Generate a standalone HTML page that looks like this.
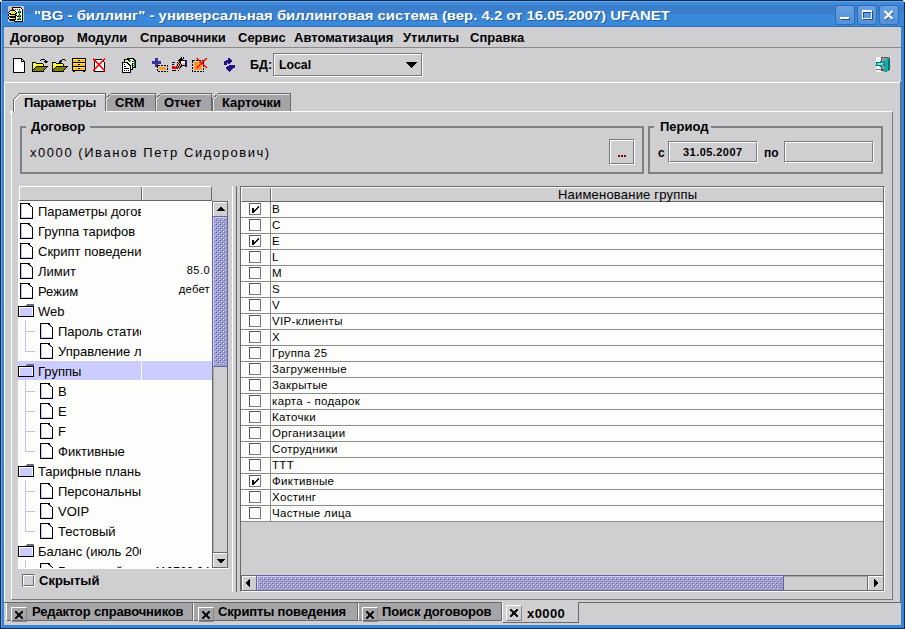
<!DOCTYPE html>
<html><head><meta charset="utf-8">
<style>
html,body{margin:0;padding:0;}
body{width:905px;height:629px;position:relative;overflow:hidden;background:#3a84d4;font-family:"Liberation Sans",sans-serif;}
div,span,svg{position:absolute;box-sizing:border-box;}
.t{white-space:pre;line-height:1;color:#000;}
.b13{font-size:13px;font-weight:bold;}
.n13{font-size:13px;}
.n12{font-size:12px;}
.n11{font-size:11.5px;letter-spacing:0.35px;}
.g{background:#cfcfd1;}
</style></head><body>
<svg style="left:0;top:0;" width="0" height="0"><defs><pattern id="bumps" x="0" y="0" width="4" height="4" patternUnits="userSpaceOnUse"><rect x="0" y="0" width="1" height="1" fill="#d8d8ff"/><rect x="2" y="2" width="1" height="1" fill="#d8d8ff"/><rect x="1" y="1" width="1" height="1" fill="#666699"/><rect x="3" y="3" width="1" height="1" fill="#666699"/></pattern></defs></svg>
<!-- window frame -->
<div style="left:0;top:0;width:905px;height:629px;border:1px solid #0e2c52;background:#3a84d4;"></div>
<div style="left:1px;top:1px;width:903px;height:1px;background:#6aa4ea;"></div>
<div style="left:1px;top:2px;width:903px;height:3px;background:#3e8ada;"></div>
<div style="left:1px;top:5px;width:903px;height:9px;background:#3a7ecc;"></div>
<div style="left:1px;top:14px;width:903px;height:12px;background:#3a88d8;"></div>
<div style="left:1px;top:26px;width:903px;height:1px;background:#2e6cc0;"></div>
<div style="left:1px;top:2px;width:1px;height:625px;background:#6aa4ea;"></div>
<div style="left:0;top:0;width:2px;height:1px;background:#fff;"></div><div style="left:0;top:1px;width:1px;height:1px;background:#fff;"></div>
<div style="left:903px;top:0;width:2px;height:1px;background:#fff;"></div><div style="left:904px;top:1px;width:1px;height:1px;background:#fff;"></div>
<!-- client -->
<div class="g" style="left:4px;top:27px;width:897px;height:598px;"></div>

<!-- title text -->
<span class="t" style="left:34px;top:9px;font-size:13px;font-weight:bold;color:#fff;transform:scaleX(1.146);transform-origin:0 0;text-shadow:1px 1px 0 rgba(10,40,90,0.45);">"BG - биллинг" - универсальная биллинговая система (вер. 4.2 от 16.05.2007) UFANET</span>

<!-- menu -->
<span class="t b13" style="left:10px;top:31px;">Договор</span>
<span class="t b13" style="left:77px;top:31px;">Модули</span>
<span class="t b13" style="left:140px;top:31px;">Справочники</span>
<span class="t b13" style="left:238px;top:31px;">Сервис</span>
<span class="t b13" style="left:294px;top:31px;">Автоматизация</span>
<span class="t b13" style="left:403px;top:31px;">Утилиты</span>
<span class="t b13" style="left:470px;top:31px;">Справка</span>
<div style="left:4px;top:47px;width:897px;height:1px;background:#8a8a8a;"></div>


<!-- title buttons -->
<div style="left:835px;top:5px;width:20px;height:20px;border:1px solid #2f6bb8;border-radius:3px;background:linear-gradient(#6aa2e2,#5290d8);"></div>
<div style="left:857px;top:5px;width:20px;height:20px;border:1px solid #2f6bb8;border-radius:3px;background:linear-gradient(#6aa2e2,#5290d8);"></div>
<div style="left:879px;top:5px;width:20px;height:20px;border:1px solid #2f6bb8;border-radius:3px;background:linear-gradient(#6aa2e2,#5290d8);"></div>
<div style="left:841px;top:18px;width:9px;height:2px;background:#234c86;"></div>
<div style="left:840px;top:17px;width:9px;height:2px;background:#fff;"></div>
<div style="left:863px;top:11px;width:10px;height:9px;border:1px solid #234c86;border-top-width:2px;"></div>
<div style="left:862px;top:10px;width:10px;height:9px;border:1px solid #fff;border-top-width:2px;"></div>
<svg style="left:879px;top:5px;" width="20" height="20" viewBox="0 0 20 20"><path d="M6 7 L14 15 M14 7 L6 15" stroke="#234c86" stroke-width="2.2"/><path d="M5.5 6 L13.5 14 M13.5 6 L5.5 14" stroke="#fff" stroke-width="2.2"/></svg>

<!-- title icon -->
<svg style="left:8px;top:6px;" width="16" height="16" viewBox="0 0 16 16" shape-rendering="crispEdges"><rect x="0" y="0" width="16" height="1" fill="#c4c4c4"/><rect x="0" y="1" width="4" height="1" fill="#c4c4c4"/><rect x="4" y="1" width="9" height="1" fill="#000"/><rect x="13" y="1" width="3" height="1" fill="#c4c4c4"/><rect x="0" y="2" width="4" height="1" fill="#c4c4c4"/><rect x="4" y="2" width="1" height="1" fill="#000"/><rect x="5" y="2" width="8" height="1" fill="#fff"/><rect x="13" y="2" width="1" height="1" fill="#000"/><rect x="14" y="2" width="1" height="1" fill="#fff"/><rect x="15" y="2" width="1" height="1" fill="#c4c4c4"/><rect x="0" y="3" width="4" height="1" fill="#c4c4c4"/><rect x="4" y="3" width="1" height="1" fill="#000"/><rect x="5" y="3" width="1" height="1" fill="#f00"/><rect x="6" y="3" width="1" height="1" fill="#fff"/><rect x="7" y="3" width="1" height="1" fill="#f00"/><rect x="8" y="3" width="1" height="1" fill="#fff"/><rect x="9" y="3" width="1" height="1" fill="#f00"/><rect x="10" y="3" width="1" height="1" fill="#fff"/><rect x="11" y="3" width="1" height="1" fill="#f00"/><rect x="12" y="3" width="2" height="1" fill="#fff"/><rect x="14" y="3" width="1" height="1" fill="#000"/><rect x="15" y="3" width="1" height="1" fill="#c4c4c4"/><rect x="0" y="4" width="2" height="1" fill="#c4c4c4"/><rect x="2" y="4" width="5" height="1" fill="#000"/><rect x="7" y="4" width="4" height="1" fill="#fff"/><rect x="11" y="4" width="1" height="1" fill="#00a000"/><rect x="12" y="4" width="2" height="1" fill="#fff"/><rect x="14" y="4" width="1" height="1" fill="#000"/><rect x="15" y="4" width="1" height="1" fill="#c4c4c4"/><rect x="0" y="5" width="1" height="1" fill="#c4c4c4"/><rect x="1" y="5" width="1" height="1" fill="#000"/><rect x="2" y="5" width="3" height="1" fill="#fff"/><rect x="5" y="5" width="2" height="1" fill="#f0f000"/><rect x="7" y="5" width="1" height="1" fill="#000"/><rect x="8" y="5" width="2" height="1" fill="#fff"/><rect x="10" y="5" width="3" height="1" fill="#00a000"/><rect x="13" y="5" width="1" height="1" fill="#fff"/><rect x="14" y="5" width="1" height="1" fill="#000"/><rect x="15" y="5" width="1" height="1" fill="#c4c4c4"/><rect x="0" y="6" width="1" height="1" fill="#000"/><rect x="1" y="6" width="2" height="1" fill="#fff"/><rect x="3" y="6" width="5" height="1" fill="#f0f000"/><rect x="8" y="6" width="1" height="1" fill="#000"/><rect x="9" y="6" width="1" height="1" fill="#fff"/><rect x="10" y="6" width="1" height="1" fill="#000"/><rect x="11" y="6" width="1" height="1" fill="#00a000"/><rect x="12" y="6" width="1" height="1" fill="#000"/><rect x="13" y="6" width="1" height="1" fill="#fff"/><rect x="14" y="6" width="1" height="1" fill="#000"/><rect x="15" y="6" width="1" height="1" fill="#c4c4c4"/><rect x="0" y="7" width="1" height="1" fill="#c4c4c4"/><rect x="1" y="7" width="2" height="1" fill="#000"/><rect x="3" y="7" width="1" height="1" fill="#fff"/><rect x="4" y="7" width="3" height="1" fill="#f0f000"/><rect x="7" y="7" width="2" height="1" fill="#000"/><rect x="9" y="7" width="2" height="1" fill="#fff"/><rect x="11" y="7" width="1" height="1" fill="#00a000"/><rect x="12" y="7" width="2" height="1" fill="#fff"/><rect x="14" y="7" width="1" height="1" fill="#000"/><rect x="15" y="7" width="1" height="1" fill="#c4c4c4"/><rect x="0" y="8" width="1" height="1" fill="#000"/><rect x="1" y="8" width="1" height="1" fill="#fff"/><rect x="2" y="8" width="6" height="1" fill="#000"/><rect x="8" y="8" width="3" height="1" fill="#fff"/><rect x="11" y="8" width="1" height="1" fill="#00a000"/><rect x="12" y="8" width="2" height="1" fill="#fff"/><rect x="14" y="8" width="1" height="1" fill="#000"/><rect x="15" y="8" width="1" height="1" fill="#c4c4c4"/><rect x="0" y="9" width="1" height="1" fill="#000"/><rect x="1" y="9" width="2" height="1" fill="#fff"/><rect x="3" y="9" width="4" height="1" fill="#f0f000"/><rect x="7" y="9" width="2" height="1" fill="#000"/><rect x="9" y="9" width="1" height="1" fill="#fff"/><rect x="10" y="9" width="3" height="1" fill="#00a000"/><rect x="13" y="9" width="1" height="1" fill="#fff"/><rect x="14" y="9" width="1" height="1" fill="#000"/><rect x="15" y="9" width="1" height="1" fill="#c4c4c4"/><rect x="0" y="10" width="1" height="1" fill="#c4c4c4"/><rect x="1" y="10" width="7" height="1" fill="#000"/><rect x="8" y="10" width="1" height="1" fill="#fff"/><rect x="9" y="10" width="2" height="1" fill="#000"/><rect x="11" y="10" width="1" height="1" fill="#00a000"/><rect x="12" y="10" width="1" height="1" fill="#000"/><rect x="13" y="10" width="1" height="1" fill="#fff"/><rect x="14" y="10" width="1" height="1" fill="#000"/><rect x="15" y="10" width="1" height="1" fill="#c4c4c4"/><rect x="0" y="11" width="1" height="1" fill="#000"/><rect x="1" y="11" width="1" height="1" fill="#fff"/><rect x="2" y="11" width="6" height="1" fill="#000"/><rect x="8" y="11" width="3" height="1" fill="#fff"/><rect x="11" y="11" width="1" height="1" fill="#00a000"/><rect x="12" y="11" width="2" height="1" fill="#fff"/><rect x="14" y="11" width="1" height="1" fill="#000"/><rect x="15" y="11" width="1" height="1" fill="#c4c4c4"/><rect x="0" y="12" width="1" height="1" fill="#000"/><rect x="1" y="12" width="3" height="1" fill="#fff"/><rect x="4" y="12" width="3" height="1" fill="#f0f000"/><rect x="7" y="12" width="1" height="1" fill="#000"/><rect x="8" y="12" width="2" height="1" fill="#fff"/><rect x="10" y="12" width="3" height="1" fill="#00a000"/><rect x="13" y="12" width="1" height="1" fill="#fff"/><rect x="14" y="12" width="1" height="1" fill="#000"/><rect x="15" y="12" width="1" height="1" fill="#c4c4c4"/><rect x="0" y="13" width="1" height="1" fill="#c4c4c4"/><rect x="1" y="13" width="7" height="1" fill="#000"/><rect x="8" y="13" width="1" height="1" fill="#fff"/><rect x="9" y="13" width="2" height="1" fill="#000"/><rect x="11" y="13" width="1" height="1" fill="#00a000"/><rect x="12" y="13" width="1" height="1" fill="#000"/><rect x="13" y="13" width="1" height="1" fill="#fff"/><rect x="14" y="13" width="1" height="1" fill="#000"/><rect x="15" y="13" width="1" height="1" fill="#c4c4c4"/><rect x="0" y="14" width="2" height="1" fill="#c4c4c4"/><rect x="2" y="14" width="5" height="1" fill="#000"/><rect x="7" y="14" width="7" height="1" fill="#fff"/><rect x="14" y="14" width="1" height="1" fill="#000"/><rect x="15" y="14" width="1" height="1" fill="#c4c4c4"/><rect x="0" y="15" width="6" height="1" fill="#c4c4c4"/><rect x="6" y="15" width="9" height="1" fill="#000"/><rect x="15" y="15" width="1" height="1" fill="#c4c4c4"/></svg>

<!-- toolbar icons -->
<svg style="left:13px;top:58px;" width="13" height="15" viewBox="0 0 13 15" shape-rendering="crispEdges">
<path d="M0.5 0.5 H8.5 L11.5 3.5 V14.5 H0.5 Z" fill="#fff" stroke="#000"/><path d="M8.5 0.5 V3.5 H11.5" fill="none" stroke="#000"/></svg>

<svg style="left:32px;top:58px;" width="16" height="14" viewBox="0 0 16 14" shape-rendering="crispEdges"><rect x="9" y="1" width="4" height="1" fill="#000"/><rect x="8" y="2" width="1" height="1" fill="#000"/><rect x="13" y="2" width="1" height="1" fill="#000"/><rect x="12" y="3" width="4" height="1" fill="#000"/><rect x="0" y="4" width="4" height="1" fill="#000"/><rect x="13" y="4" width="2" height="1" fill="#000"/><rect x="0" y="5" width="1" height="1" fill="#000"/><rect x="1" y="5" width="3" height="1" fill="#ffff00"/><rect x="4" y="5" width="7" height="1" fill="#000"/><rect x="0" y="6" width="1" height="1" fill="#000"/><rect x="1" y="6" width="1" height="1" fill="#ffff00"/><rect x="2" y="6" width="1" height="1" fill="#ffffb0"/><rect x="3" y="6" width="1" height="1" fill="#ffff00"/><rect x="4" y="6" width="1" height="1" fill="#ffffb0"/><rect x="5" y="6" width="1" height="1" fill="#ffff00"/><rect x="6" y="6" width="1" height="1" fill="#ffffb0"/><rect x="7" y="6" width="1" height="1" fill="#ffff00"/><rect x="8" y="6" width="1" height="1" fill="#ffffb0"/><rect x="9" y="6" width="2" height="1" fill="#ffff00"/><rect x="11" y="6" width="1" height="1" fill="#000"/><rect x="0" y="7" width="1" height="1" fill="#000"/><rect x="1" y="7" width="10" height="1" fill="#ffff00"/><rect x="11" y="7" width="1" height="1" fill="#000"/><rect x="0" y="8" width="1" height="1" fill="#000"/><rect x="1" y="8" width="1" height="1" fill="#ffff00"/><rect x="2" y="8" width="1" height="1" fill="#ffffb0"/><rect x="3" y="8" width="1" height="1" fill="#ffff00"/><rect x="4" y="8" width="12" height="1" fill="#000"/><rect x="0" y="9" width="1" height="1" fill="#000"/><rect x="1" y="9" width="2" height="1" fill="#ffff00"/><rect x="3" y="9" width="1" height="1" fill="#000"/><rect x="4" y="9" width="10" height="1" fill="#808000"/><rect x="14" y="9" width="1" height="1" fill="#000"/><rect x="0" y="10" width="1" height="1" fill="#000"/><rect x="1" y="10" width="1" height="1" fill="#ffff00"/><rect x="2" y="10" width="1" height="1" fill="#000"/><rect x="3" y="10" width="10" height="1" fill="#808000"/><rect x="13" y="10" width="1" height="1" fill="#000"/><rect x="0" y="11" width="2" height="1" fill="#000"/><rect x="2" y="11" width="10" height="1" fill="#808000"/><rect x="12" y="11" width="1" height="1" fill="#000"/><rect x="0" y="12" width="1" height="1" fill="#000"/><rect x="1" y="12" width="10" height="1" fill="#808000"/><rect x="11" y="12" width="1" height="1" fill="#000"/><rect x="0" y="13" width="12" height="1" fill="#000"/></svg>

<svg style="left:52px;top:58px;" width="16" height="14" viewBox="0 0 16 14" shape-rendering="crispEdges"><rect x="10" y="1" width="3" height="1" fill="#000"/><rect x="8" y="2" width="2" height="1" fill="#000"/><rect x="13" y="2" width="1" height="1" fill="#000"/><rect x="7" y="3" width="3" height="1" fill="#000"/><rect x="0" y="4" width="4" height="1" fill="#000"/><rect x="7" y="4" width="2" height="1" fill="#000"/><rect x="0" y="5" width="1" height="1" fill="#000"/><rect x="1" y="5" width="3" height="1" fill="#ffff00"/><rect x="4" y="5" width="7" height="1" fill="#000"/><rect x="0" y="6" width="1" height="1" fill="#000"/><rect x="1" y="6" width="1" height="1" fill="#ffff00"/><rect x="2" y="6" width="1" height="1" fill="#ffffb0"/><rect x="3" y="6" width="1" height="1" fill="#ffff00"/><rect x="4" y="6" width="1" height="1" fill="#ffffb0"/><rect x="5" y="6" width="1" height="1" fill="#ffff00"/><rect x="6" y="6" width="1" height="1" fill="#ffffb0"/><rect x="7" y="6" width="1" height="1" fill="#ffff00"/><rect x="8" y="6" width="1" height="1" fill="#ffffb0"/><rect x="9" y="6" width="2" height="1" fill="#ffff00"/><rect x="11" y="6" width="1" height="1" fill="#000"/><rect x="0" y="7" width="1" height="1" fill="#000"/><rect x="1" y="7" width="10" height="1" fill="#ffff00"/><rect x="11" y="7" width="1" height="1" fill="#000"/><rect x="0" y="8" width="1" height="1" fill="#000"/><rect x="1" y="8" width="1" height="1" fill="#ffff00"/><rect x="2" y="8" width="1" height="1" fill="#ffffb0"/><rect x="3" y="8" width="1" height="1" fill="#ffff00"/><rect x="4" y="8" width="12" height="1" fill="#000"/><rect x="0" y="9" width="1" height="1" fill="#000"/><rect x="1" y="9" width="2" height="1" fill="#ffff00"/><rect x="3" y="9" width="1" height="1" fill="#000"/><rect x="4" y="9" width="10" height="1" fill="#808000"/><rect x="14" y="9" width="1" height="1" fill="#000"/><rect x="0" y="10" width="1" height="1" fill="#000"/><rect x="1" y="10" width="1" height="1" fill="#ffff00"/><rect x="2" y="10" width="1" height="1" fill="#000"/><rect x="3" y="10" width="10" height="1" fill="#808000"/><rect x="13" y="10" width="1" height="1" fill="#000"/><rect x="0" y="11" width="2" height="1" fill="#000"/><rect x="2" y="11" width="10" height="1" fill="#808000"/><rect x="12" y="11" width="1" height="1" fill="#000"/><rect x="0" y="12" width="1" height="1" fill="#000"/><rect x="1" y="12" width="10" height="1" fill="#808000"/><rect x="11" y="12" width="1" height="1" fill="#000"/><rect x="0" y="13" width="12" height="1" fill="#000"/></svg>

<svg style="left:72px;top:58px;" width="14" height="14" viewBox="0 0 14 14" shape-rendering="crispEdges">
<rect x="0.5" y="0.5" width="13" height="12" fill="#ffc020" stroke="#000"/>
<rect x="1" y="4" width="12" height="1" fill="#000"/><rect x="1" y="8" width="12" height="1" fill="#000"/>
<rect x="1" y="1" width="12" height="1" fill="#ffe060"/><rect x="1" y="5" width="12" height="1" fill="#ffe060"/><rect x="1" y="9" width="12" height="1" fill="#ffe060"/>
<rect x="6" y="2" width="2" height="1" fill="#000"/><rect x="6" y="6" width="2" height="1" fill="#000"/><rect x="6" y="10" width="2" height="1" fill="#000"/>
<rect x="1" y="13" width="2" height="1" fill="#000"/><rect x="11" y="13" width="2" height="1" fill="#000"/>
</svg>

<svg style="left:93px;top:58px;" width="13" height="14" viewBox="0 0 13 14" shape-rendering="crispEdges">
<path d="M1.5 1.5 H8.5 L11.5 4.5 V13.5 H1.5 Z" fill="#fff" stroke="#000"/>
<path d="M0 0.5 L12 13 M12 0.5 L0 13" stroke="#f00" stroke-width="1.6" shape-rendering="auto"/>
</svg>

<svg style="left:122px;top:58px;" width="15" height="15" viewBox="0 0 15 15" shape-rendering="crispEdges"><rect x="5" y="0" width="7" height="1" fill="#000"/><rect x="2" y="1" width="5" height="1" fill="#000"/><rect x="7" y="1" width="1" height="1" fill="#00a000"/><rect x="8" y="1" width="3" height="1" fill="#fff"/><rect x="11" y="1" width="2" height="1" fill="#000"/><rect x="2" y="2" width="1" height="1" fill="#000"/><rect x="3" y="2" width="1" height="1" fill="#e8e800"/><rect x="4" y="2" width="2" height="1" fill="#fff"/><rect x="6" y="2" width="1" height="1" fill="#000"/><rect x="7" y="2" width="2" height="1" fill="#00a000"/><rect x="9" y="2" width="3" height="1" fill="#fff"/><rect x="12" y="2" width="2" height="1" fill="#000"/><rect x="2" y="3" width="1" height="1" fill="#000"/><rect x="3" y="3" width="2" height="1" fill="#fff"/><rect x="5" y="3" width="1" height="1" fill="#e8e800"/><rect x="6" y="3" width="1" height="1" fill="#fff"/><rect x="7" y="3" width="1" height="1" fill="#000"/><rect x="8" y="3" width="2" height="1" fill="#fff"/><rect x="10" y="3" width="1" height="1" fill="#000"/><rect x="11" y="3" width="2" height="1" fill="#00a000"/><rect x="13" y="3" width="1" height="1" fill="#000"/><rect x="0" y="4" width="6" height="1" fill="#000"/><rect x="6" y="4" width="2" height="1" fill="#fff"/><rect x="8" y="4" width="1" height="1" fill="#e8e800"/><rect x="9" y="4" width="3" height="1" fill="#fff"/><rect x="12" y="4" width="1" height="1" fill="#00a000"/><rect x="13" y="4" width="1" height="1" fill="#000"/><rect x="0" y="5" width="1" height="1" fill="#000"/><rect x="1" y="5" width="4" height="1" fill="#fff"/><rect x="5" y="5" width="2" height="1" fill="#000"/><rect x="7" y="5" width="3" height="1" fill="#fff"/><rect x="10" y="5" width="1" height="1" fill="#000"/><rect x="11" y="5" width="2" height="1" fill="#00a000"/><rect x="13" y="5" width="1" height="1" fill="#000"/><rect x="0" y="6" width="1" height="1" fill="#000"/><rect x="1" y="6" width="1" height="1" fill="#fff"/><rect x="2" y="6" width="1" height="1" fill="#000"/><rect x="3" y="6" width="3" height="1" fill="#fff"/><rect x="6" y="6" width="2" height="1" fill="#000"/><rect x="8" y="6" width="1" height="1" fill="#fff"/><rect x="9" y="6" width="1" height="1" fill="#e8e800"/><rect x="10" y="6" width="1" height="1" fill="#000"/><rect x="11" y="6" width="1" height="1" fill="#fff"/><rect x="12" y="6" width="1" height="1" fill="#00a000"/><rect x="13" y="6" width="1" height="1" fill="#000"/><rect x="0" y="7" width="1" height="1" fill="#000"/><rect x="1" y="7" width="6" height="1" fill="#fff"/><rect x="7" y="7" width="2" height="1" fill="#000"/><rect x="9" y="7" width="1" height="1" fill="#fff"/><rect x="10" y="7" width="1" height="1" fill="#000"/><rect x="11" y="7" width="2" height="1" fill="#00a000"/><rect x="13" y="7" width="1" height="1" fill="#000"/><rect x="0" y="8" width="1" height="1" fill="#000"/><rect x="1" y="8" width="1" height="1" fill="#fff"/><rect x="2" y="8" width="2" height="1" fill="#000"/><rect x="4" y="8" width="4" height="1" fill="#fff"/><rect x="8" y="8" width="1" height="1" fill="#000"/><rect x="9" y="8" width="1" height="1" fill="#fff"/><rect x="10" y="8" width="1" height="1" fill="#000"/><rect x="11" y="8" width="1" height="1" fill="#fff"/><rect x="12" y="8" width="1" height="1" fill="#00a000"/><rect x="13" y="8" width="1" height="1" fill="#000"/><rect x="0" y="9" width="1" height="1" fill="#000"/><rect x="1" y="9" width="7" height="1" fill="#fff"/><rect x="8" y="9" width="1" height="1" fill="#000"/><rect x="9" y="9" width="1" height="1" fill="#fff"/><rect x="10" y="9" width="4" height="1" fill="#000"/><rect x="0" y="10" width="1" height="1" fill="#000"/><rect x="1" y="10" width="1" height="1" fill="#fff"/><rect x="2" y="10" width="5" height="1" fill="#000"/><rect x="7" y="10" width="1" height="1" fill="#fff"/><rect x="8" y="10" width="1" height="1" fill="#000"/><rect x="9" y="10" width="1" height="1" fill="#fff"/><rect x="10" y="10" width="1" height="1" fill="#000"/><rect x="0" y="11" width="1" height="1" fill="#000"/><rect x="1" y="11" width="7" height="1" fill="#fff"/><rect x="8" y="11" width="3" height="1" fill="#000"/><rect x="0" y="12" width="1" height="1" fill="#000"/><rect x="1" y="12" width="1" height="1" fill="#fff"/><rect x="2" y="12" width="1" height="1" fill="#000"/><rect x="3" y="12" width="1" height="1" fill="#fff"/><rect x="4" y="12" width="1" height="1" fill="#000"/><rect x="5" y="12" width="1" height="1" fill="#fff"/><rect x="6" y="12" width="1" height="1" fill="#000"/><rect x="7" y="12" width="1" height="1" fill="#fff"/><rect x="8" y="12" width="1" height="1" fill="#000"/><rect x="0" y="13" width="1" height="1" fill="#000"/><rect x="1" y="13" width="7" height="1" fill="#fff"/><rect x="8" y="13" width="1" height="1" fill="#000"/><rect x="0" y="14" width="9" height="1" fill="#000"/></svg>

<svg style="left:152px;top:58px;" width="16" height="15" viewBox="0 0 16 15" shape-rendering="crispEdges">
<rect x="3" y="0" width="3" height="9" fill="#333399"/><rect x="0" y="3" width="9" height="3" fill="#333399"/>
<path d="M5.5 7.5 H15.5 V13.5 H5.5 Z" fill="none" stroke="#000" stroke-dasharray="2 1"/>
<rect x="7" y="9" width="7" height="3" fill="#ff9a20"/>
</svg>

<svg style="left:172px;top:57px;" width="15" height="14" viewBox="0 0 15 14" shape-rendering="crispEdges"><rect x="9" y="0" width="1" height="1" fill="#000"/><rect x="11" y="0" width="1" height="1" fill="#000"/><rect x="8" y="1" width="2" height="1" fill="#000"/><rect x="11" y="1" width="1" height="1" fill="#000"/><rect x="7" y="2" width="4" height="1" fill="#000"/><rect x="6" y="3" width="7" height="1" fill="#000"/><rect x="13" y="3" width="2" height="1" fill="#220e88"/><rect x="6" y="4" width="1" height="1" fill="#f0b070"/><rect x="7" y="4" width="2" height="1" fill="#000"/><rect x="9" y="4" width="4" height="1" fill="#fff8e8"/><rect x="13" y="4" width="2" height="1" fill="#220e88"/><rect x="0" y="5" width="3" height="1" fill="#000"/><rect x="5" y="5" width="1" height="1" fill="#000"/><rect x="6" y="5" width="1" height="1" fill="#f0b070"/><rect x="7" y="5" width="2" height="1" fill="#000"/><rect x="9" y="5" width="4" height="1" fill="#fff8e8"/><rect x="13" y="5" width="2" height="1" fill="#220e88"/><rect x="5" y="6" width="1" height="1" fill="#f0b070"/><rect x="6" y="6" width="1" height="1" fill="#000"/><rect x="7" y="6" width="1" height="1" fill="#f0b070"/><rect x="8" y="6" width="1" height="1" fill="#000"/><rect x="9" y="6" width="4" height="1" fill="#f8c890"/><rect x="13" y="6" width="2" height="1" fill="#220e88"/><rect x="0" y="7" width="2" height="1" fill="#000"/><rect x="4" y="7" width="1" height="1" fill="#f0b070"/><rect x="5" y="7" width="1" height="1" fill="#000"/><rect x="6" y="7" width="1" height="1" fill="#f0b070"/><rect x="7" y="7" width="1" height="1" fill="#000"/><rect x="8" y="7" width="1" height="1" fill="#f0b070"/><rect x="9" y="7" width="1" height="1" fill="#000"/><rect x="10" y="7" width="3" height="1" fill="#f8c890"/><rect x="13" y="7" width="2" height="1" fill="#220e88"/><rect x="5" y="8" width="1" height="1" fill="#000"/><rect x="6" y="8" width="1" height="1" fill="#f0b070"/><rect x="7" y="8" width="1" height="1" fill="#000"/><rect x="8" y="8" width="1" height="1" fill="#f0b070"/><rect x="9" y="8" width="4" height="1" fill="#000"/><rect x="13" y="8" width="2" height="1" fill="#220e88"/><rect x="0" y="9" width="3" height="1" fill="#f00000"/><rect x="4" y="9" width="1" height="1" fill="#000"/><rect x="5" y="9" width="1" height="1" fill="#f0b070"/><rect x="6" y="9" width="1" height="1" fill="#000"/><rect x="7" y="9" width="1" height="1" fill="#f0b070"/><rect x="8" y="9" width="2" height="1" fill="#000"/><rect x="13" y="9" width="2" height="1" fill="#220e88"/><rect x="0" y="10" width="6" height="1" fill="#f00000"/><rect x="6" y="10" width="1" height="1" fill="#000"/><rect x="7" y="10" width="1" height="1" fill="#f0b070"/><rect x="8" y="10" width="1" height="1" fill="#000"/><rect x="0" y="11" width="6" height="1" fill="#f00000"/><rect x="7" y="11" width="1" height="1" fill="#000"/><rect x="0" y="13" width="4" height="1" fill="#000"/><rect x="6" y="13" width="1" height="1" fill="#000"/></svg>

<svg style="left:192px;top:58px;" width="16" height="14" viewBox="0 0 16 14" shape-rendering="crispEdges">
<path d="M0.5 2.5 H11.5 V13.5 H0.5 Z" fill="none" stroke="#000" stroke-dasharray="2 1"/>
<rect x="2" y="4" width="8" height="8" fill="#ff9a20"/>
<path d="M4 10 L9 5" stroke="#fff" stroke-width="1"/>
<path d="M4.5 0 L15 10 M15 0 L4.5 10" stroke="#f00" stroke-width="1.4" shape-rendering="auto"/>
</svg>

<svg style="left:224px;top:58px;" width="11" height="14" viewBox="0 0 11 14" shape-rendering="crispEdges"><rect x="4" y="0" width="2" height="1" fill="#221188"/><rect x="4" y="1" width="3" height="1" fill="#221188"/><rect x="2" y="2" width="6" height="1" fill="#221188"/><rect x="0" y="3" width="8" height="1" fill="#221188"/><rect x="0" y="4" width="7" height="1" fill="#221188"/><rect x="0" y="5" width="3" height="1" fill="#221188"/><rect x="4" y="5" width="2" height="1" fill="#221188"/><rect x="0" y="6" width="3" height="1" fill="#221188"/><rect x="5" y="7" width="6" height="1" fill="#221188"/><rect x="3" y="8" width="8" height="1" fill="#221188"/><rect x="2" y="9" width="9" height="1" fill="#221188"/><rect x="2" y="10" width="7" height="1" fill="#221188"/><rect x="3" y="11" width="5" height="1" fill="#221188"/><rect x="4" y="12" width="3" height="1" fill="#221188"/><rect x="5" y="13" width="1" height="1" fill="#221188"/></svg>

<span class="t" style="left:250px;top:59px;font-size:12.5px;font-weight:bold;">БД:</span>
<div style="left:274px;top:54px;width:149px;height:23px;border:1px solid #fff;"></div>
<div style="left:273px;top:53px;width:149px;height:23px;border:1px solid #7a7a7a;"></div>
<span class="t" style="left:279px;top:59px;font-size:12.3px;font-weight:bold;">Local</span>
<svg style="left:406px;top:62px;" width="11" height="6" viewBox="0 0 11 6" shape-rendering="crispEdges"><path d="M0 0 H11 V1 H10 V2 H9 V3 H8 V4 H7 V5 H6 V6 H5 V5 H4 V4 H3 V3 H2 V2 H1 V1 H0 Z" fill="#000"/></svg>

<svg style="left:876px;top:57px;" width="16" height="15" viewBox="0 0 16 15" shape-rendering="crispEdges"><rect x="0" y="0" width="5" height="1" fill="#f2f2f0"/><rect x="5" y="0" width="8" height="1" fill="#5a5a5a"/><rect x="0" y="1" width="5" height="1" fill="#f2f2f0"/><rect x="5" y="1" width="1" height="1" fill="#5a5a5a"/><rect x="6" y="1" width="5" height="1" fill="#9a9a9a"/><rect x="11" y="1" width="2" height="1" fill="#14b0a8"/><rect x="13" y="1" width="1" height="1" fill="#086e6e"/><rect x="0" y="2" width="5" height="1" fill="#f2f2f0"/><rect x="5" y="2" width="1" height="1" fill="#5a5a5a"/><rect x="6" y="2" width="4" height="1" fill="#9a9a9a"/><rect x="10" y="2" width="3" height="1" fill="#14b0a8"/><rect x="13" y="2" width="1" height="1" fill="#086e6e"/><rect x="0" y="3" width="5" height="1" fill="#f2f2f0"/><rect x="5" y="3" width="1" height="1" fill="#5a5a5a"/><rect x="6" y="3" width="3" height="1" fill="#9a9a9a"/><rect x="9" y="3" width="3" height="1" fill="#14b0a8"/><rect x="12" y="3" width="2" height="1" fill="#086e6e"/><rect x="0" y="4" width="4" height="1" fill="#f2f2f0"/><rect x="4" y="4" width="2" height="1" fill="#0c6a6a"/><rect x="6" y="4" width="1" height="1" fill="#9a9a9a"/><rect x="7" y="4" width="1" height="1" fill="#5a5a5a"/><rect x="8" y="4" width="4" height="1" fill="#14b0a8"/><rect x="12" y="4" width="2" height="1" fill="#086e6e"/><rect x="0" y="5" width="5" height="1" fill="#0c6a6a"/><rect x="5" y="5" width="1" height="1" fill="#40f0f0"/><rect x="6" y="5" width="1" height="1" fill="#0c6a6a"/><rect x="7" y="5" width="1" height="1" fill="#5a5a5a"/><rect x="8" y="5" width="4" height="1" fill="#14b0a8"/><rect x="12" y="5" width="2" height="1" fill="#086e6e"/><rect x="0" y="6" width="1" height="1" fill="#0c6a6a"/><rect x="1" y="6" width="7" height="1" fill="#40f0f0"/><rect x="8" y="6" width="1" height="1" fill="#0c6a6a"/><rect x="9" y="6" width="3" height="1" fill="#14b0a8"/><rect x="12" y="6" width="2" height="1" fill="#086e6e"/><rect x="0" y="7" width="1" height="1" fill="#0c6a6a"/><rect x="1" y="7" width="6" height="1" fill="#40f0f0"/><rect x="7" y="7" width="1" height="1" fill="#0c6a6a"/><rect x="8" y="7" width="1" height="1" fill="#5a5a5a"/><rect x="9" y="7" width="3" height="1" fill="#14b0a8"/><rect x="12" y="7" width="2" height="1" fill="#086e6e"/><rect x="0" y="8" width="5" height="1" fill="#0c6a6a"/><rect x="5" y="8" width="1" height="1" fill="#40f0f0"/><rect x="6" y="8" width="1" height="1" fill="#0c6a6a"/><rect x="7" y="8" width="1" height="1" fill="#9a9a9a"/><rect x="8" y="8" width="1" height="1" fill="#5a5a5a"/><rect x="9" y="8" width="3" height="1" fill="#14b0a8"/><rect x="12" y="8" width="2" height="1" fill="#086e6e"/><rect x="0" y="9" width="4" height="1" fill="#f2f2f0"/><rect x="4" y="9" width="2" height="1" fill="#0c6a6a"/><rect x="6" y="9" width="2" height="1" fill="#9a9a9a"/><rect x="8" y="9" width="4" height="1" fill="#14b0a8"/><rect x="12" y="9" width="2" height="1" fill="#086e6e"/><rect x="0" y="10" width="5" height="1" fill="#f2f2f0"/><rect x="5" y="10" width="1" height="1" fill="#5a5a5a"/><rect x="6" y="10" width="2" height="1" fill="#9a9a9a"/><rect x="8" y="10" width="4" height="1" fill="#14b0a8"/><rect x="12" y="10" width="2" height="1" fill="#086e6e"/><rect x="0" y="11" width="5" height="1" fill="#f2f2f0"/><rect x="5" y="11" width="1" height="1" fill="#5a5a5a"/><rect x="6" y="11" width="2" height="1" fill="#9a9a9a"/><rect x="8" y="11" width="4" height="1" fill="#14b0a8"/><rect x="12" y="11" width="2" height="1" fill="#086e6e"/><rect x="0" y="12" width="5" height="1" fill="#7a7a7a"/><rect x="5" y="12" width="3" height="1" fill="#5a5a5a"/><rect x="8" y="12" width="4" height="1" fill="#14b0a8"/><rect x="12" y="12" width="2" height="1" fill="#086e6e"/><rect x="0" y="13" width="5" height="1" fill="#f2f2f0"/><rect x="5" y="13" width="3" height="1" fill="#5a5a5a"/><rect x="8" y="13" width="4" height="1" fill="#14b0a8"/><rect x="12" y="13" width="1" height="1" fill="#086e6e"/><rect x="0" y="14" width="5" height="1" fill="#f2f2f0"/><rect x="8" y="14" width="2" height="1" fill="#14b0a8"/><rect x="10" y="14" width="1" height="1" fill="#086e6e"/></svg>

<!-- toolbar separator / outer panel -->
<div style="left:4px;top:82px;width:897px;height:1px;background:#fff;"></div>
<div style="left:4px;top:82px;width:1px;height:520px;background:#fff;"></div>
<div style="left:900px;top:82px;width:1px;height:521px;background:#6a6a6a;"></div>

<!-- tabs -->
<!-- content area border -->
<div style="left:11px;top:111px;width:882px;height:489px;border-top:1px solid #fff;border-left:1px solid #fff;border-right:1px solid #7a7a7a;border-bottom:1px solid #7a7a7a;"></div>
<!-- unselected tabs -->
<svg style="left:100px;top:92px;" width="200" height="20" viewBox="0 0 200 20" shape-rendering="crispEdges">
<path d="M6 19 V6 L11 1 H55 V19 Z" fill="#a5a5a8"/>
<path d="M5.5 19 V6.5 L11.5 1.5 H55.5 V19" fill="none" stroke="#6a6a6a"/>
<path d="M6.5 19 V6.9 L11.9 2.5 H55" fill="none" stroke="#e8e8e8"/>
<path d="M56 19 V6 L61 1 H112 V19 Z" fill="#a5a5a8"/>
<path d="M55.5 19 V6.5 L61.5 1.5 H111.5 V19" fill="none" stroke="#6a6a6a"/>
<path d="M56.5 19 V6.9 L61.9 2.5 H111" fill="none" stroke="#e8e8e8"/>
<path d="M113 19 V6 L118 1 H191 V19 Z" fill="#a5a5a8"/>
<path d="M112.5 19 V6.5 L118.5 1.5 H190.5 V19" fill="none" stroke="#6a6a6a"/>
<path d="M113.5 19 V6.9 L118.9 2.5 H190" fill="none" stroke="#e8e8e8"/>
</svg>
<!-- selected tab -->
<svg style="left:10px;top:92px;" width="100" height="21" viewBox="0 0 100 21" shape-rendering="crispEdges">
<path d="M3 20 V7 L9 1 H95 V20 Z" fill="#cfcfd1"/>
<path d="M3.5 20 V7.5 L9.5 1.5 H95.5 V19" fill="none" stroke="#6a6a6a"/>
<path d="M4.5 20 V7.9 L9.9 2.5 H95" fill="none" stroke="#fff"/>
<rect x="0" y="19" width="1" height="2" fill="#fff"/><rect x="1" y="19" width="2" height="1" fill="#fff"/>
</svg>
<span class="t b13" style="left:24px;top:96px;letter-spacing:-0.2px;">Параметры</span>
<span class="t b13" style="left:115px;top:96px;">CRM</span>
<span class="t b13" style="left:164px;top:96px;">Отчет</span>
<span class="t b13" style="left:222px;top:96px;">Карточки</span>

<!-- group Договор -->
<div style="left:20px;top:126px;width:624px;height:48px;border:2px solid #808084;"></div>
<div class="g" style="left:26px;top:120px;width:64px;height:10px;"></div>
<span class="t b13" style="left:31px;top:120px;">Договор</span>
<span class="t" style="left:30px;top:146px;font-size:13px;letter-spacing:1.55px;">x0000 (Иванов Петр Сидорович)</span>
<div style="left:609px;top:139px;width:26px;height:26px;border-top:1px solid #7a7a7a;border-left:1px solid #7a7a7a;border-right:1px solid #fff;border-bottom:1px solid #fff;"></div>
<div style="left:610px;top:140px;width:24px;height:24px;border-top:1px solid #fff;border-left:1px solid #fff;border-right:1px solid #7a7a7a;border-bottom:1px solid #7a7a7a;"></div>
<div style="left:618px;top:155px;width:2px;height:2px;background:#900000;"></div>
<div style="left:621px;top:155px;width:2px;height:2px;background:#900000;"></div>
<div style="left:624px;top:155px;width:2px;height:2px;background:#900000;"></div>

<!-- group Период -->
<div style="left:648px;top:126px;width:235px;height:48px;border:2px solid #808084;"></div>
<div class="g" style="left:654px;top:120px;width:57px;height:10px;"></div>
<span class="t b13" style="left:660px;top:120px;">Период</span>
<span class="t" style="left:658px;top:147px;font-size:12px;font-weight:bold;">с</span>
<div style="left:668px;top:141px;width:90px;height:22px;border-top:1px solid #7a7a7a;border-left:1px solid #7a7a7a;border-right:1px solid #fff;border-bottom:1px solid #fff;"></div>
<div style="left:669px;top:142px;width:88px;height:20px;border-top:1px solid #fff;border-left:1px solid #fff;border-right:1px solid #7a7a7a;border-bottom:1px solid #7a7a7a;"></div>
<span class="t" style="left:683px;top:147px;font-size:11px;font-weight:bold;letter-spacing:0.45px;">31.05.2007</span>
<span class="t" style="left:764px;top:147px;font-size:12px;font-weight:bold;">по</span>
<div style="left:784px;top:141px;width:90px;height:22px;border-top:1px solid #7a7a7a;border-left:1px solid #7a7a7a;border-right:1px solid #fff;border-bottom:1px solid #fff;"></div>
<div style="left:785px;top:142px;width:88px;height:20px;border-top:1px solid #fff;border-left:1px solid #fff;border-right:1px solid #7a7a7a;border-bottom:1px solid #7a7a7a;"></div>
<!-- tree header -->
<div style="left:19px;top:186px;width:193px;height:15px;background:#cfcfd1;border-top:1px solid #fff;border-left:1px solid #fff;border-bottom:1px solid #6a6a6a;border-right:1px solid #6a6a6a;"></div>
<div style="left:141px;top:187px;width:1px;height:13px;background:#6a6a6a;"></div>
<div style="left:142px;top:187px;width:1px;height:13px;background:#fff;"></div>
<!-- tree body -->
<div style="left:18px;top:201px;width:194px;height:367px;background:#fdfdfb;overflow:hidden;">
<svg style="left:2px;top:2px;" width="13" height="16" viewBox="0 0 13 16" shape-rendering="crispEdges"><path d="M0.5 0.5 H8.5 L12.5 4.5 V15.5 H0.5 Z" fill="#fff" stroke="#000"/><rect x="1" y="1" width="1" height="14" fill="#c4c4fa"/><rect x="1" y="14" width="11" height="1" fill="#c4c4fa"/><path d="M8.5 1.5 L11.5 4.5" stroke="#8888cc"/><rect x="8" y="0" width="2" height="2" fill="#000"/></svg>
<div style="left:0;top:0px;width:123px;height:20px;overflow:hidden;"><span class="t n13" style="left:20px;top:4px;">Параметры договора</span></div>
<svg style="left:2px;top:22px;" width="13" height="16" viewBox="0 0 13 16" shape-rendering="crispEdges"><path d="M0.5 0.5 H8.5 L12.5 4.5 V15.5 H0.5 Z" fill="#fff" stroke="#000"/><rect x="1" y="1" width="1" height="14" fill="#c4c4fa"/><rect x="1" y="14" width="11" height="1" fill="#c4c4fa"/><path d="M8.5 1.5 L11.5 4.5" stroke="#8888cc"/><rect x="8" y="0" width="2" height="2" fill="#000"/></svg>
<div style="left:0;top:20px;width:123px;height:20px;overflow:hidden;"><span class="t n13" style="left:20px;top:4px;">Группа тарифов</span></div>
<svg style="left:2px;top:42px;" width="13" height="16" viewBox="0 0 13 16" shape-rendering="crispEdges"><path d="M0.5 0.5 H8.5 L12.5 4.5 V15.5 H0.5 Z" fill="#fff" stroke="#000"/><rect x="1" y="1" width="1" height="14" fill="#c4c4fa"/><rect x="1" y="14" width="11" height="1" fill="#c4c4fa"/><path d="M8.5 1.5 L11.5 4.5" stroke="#8888cc"/><rect x="8" y="0" width="2" height="2" fill="#000"/></svg>
<div style="left:0;top:40px;width:123px;height:20px;overflow:hidden;"><span class="t n13" style="left:20px;top:4px;">Скрипт поведения</span></div>
<svg style="left:2px;top:62px;" width="13" height="16" viewBox="0 0 13 16" shape-rendering="crispEdges"><path d="M0.5 0.5 H8.5 L12.5 4.5 V15.5 H0.5 Z" fill="#fff" stroke="#000"/><rect x="1" y="1" width="1" height="14" fill="#c4c4fa"/><rect x="1" y="14" width="11" height="1" fill="#c4c4fa"/><path d="M8.5 1.5 L11.5 4.5" stroke="#8888cc"/><rect x="8" y="0" width="2" height="2" fill="#000"/></svg>
<div style="left:0;top:60px;width:123px;height:20px;overflow:hidden;"><span class="t n13" style="left:20px;top:4px;">Лимит</span></div>
<span class="t" style="right:2px;top:64px;font-size:11px;letter-spacing:0.45px;">85.0</span>
<svg style="left:2px;top:82px;" width="13" height="16" viewBox="0 0 13 16" shape-rendering="crispEdges"><path d="M0.5 0.5 H8.5 L12.5 4.5 V15.5 H0.5 Z" fill="#fff" stroke="#000"/><rect x="1" y="1" width="1" height="14" fill="#c4c4fa"/><rect x="1" y="14" width="11" height="1" fill="#c4c4fa"/><path d="M8.5 1.5 L11.5 4.5" stroke="#8888cc"/><rect x="8" y="0" width="2" height="2" fill="#000"/></svg>
<div style="left:0;top:80px;width:123px;height:20px;overflow:hidden;"><span class="t n13" style="left:20px;top:4px;">Режим</span></div>
<span class="t" style="right:2px;top:83px;font-size:11.3px;letter-spacing:0.2px;">дебет</span>
<svg style="left:0px;top:103px;" width="17" height="14" viewBox="0 0 17 14" shape-rendering="crispEdges"><rect x="9" y="0" width="7" height="2" fill="#666699"/><rect x="8" y="1" width="1" height="2" fill="#666699"/><rect x="9" y="2" width="7" height="1" fill="#8a8ac0"/><path d="M0.5 2.5 H15.5 V12.5 H0.5 Z" fill="#fff" stroke="#000"/><rect x="9" y="2" width="7" height="1" fill="#000"/><rect x="2" y="4" width="12" height="8" fill="#ccccff"/></svg>
<div style="left:0;top:100px;width:123px;height:20px;overflow:hidden;"><span class="t n13" style="left:20px;top:4px;">Web</span></div>
<svg style="left:22px;top:122px;" width="13" height="16" viewBox="0 0 13 16" shape-rendering="crispEdges"><path d="M0.5 0.5 H8.5 L12.5 4.5 V15.5 H0.5 Z" fill="#fff" stroke="#000"/><rect x="1" y="1" width="1" height="14" fill="#c4c4fa"/><rect x="1" y="14" width="11" height="1" fill="#c4c4fa"/><path d="M8.5 1.5 L11.5 4.5" stroke="#8888cc"/><rect x="8" y="0" width="2" height="2" fill="#000"/></svg>
<div style="left:0;top:120px;width:123px;height:20px;overflow:hidden;"><span class="t n13" style="left:40px;top:4px;">Пароль статистики</span></div>
<svg style="left:22px;top:142px;" width="13" height="16" viewBox="0 0 13 16" shape-rendering="crispEdges"><path d="M0.5 0.5 H8.5 L12.5 4.5 V15.5 H0.5 Z" fill="#fff" stroke="#000"/><rect x="1" y="1" width="1" height="14" fill="#c4c4fa"/><rect x="1" y="14" width="11" height="1" fill="#c4c4fa"/><path d="M8.5 1.5 L11.5 4.5" stroke="#8888cc"/><rect x="8" y="0" width="2" height="2" fill="#000"/></svg>
<div style="left:0;top:140px;width:123px;height:20px;overflow:hidden;"><span class="t n13" style="left:40px;top:4px;">Управление лимитом</span></div>
<div style="left:0;top:160px;width:123px;height:19px;background:#ccccff;"></div>
<div style="left:124px;top:160px;width:70px;height:19px;background:#ccccff;"></div>
<svg style="left:0px;top:163px;" width="17" height="14" viewBox="0 0 17 14" shape-rendering="crispEdges"><rect x="9" y="0" width="7" height="2" fill="#666699"/><rect x="8" y="1" width="1" height="2" fill="#666699"/><rect x="9" y="2" width="7" height="1" fill="#8a8ac0"/><path d="M0.5 2.5 H15.5 V12.5 H0.5 Z" fill="#fff" stroke="#000"/><rect x="9" y="2" width="7" height="1" fill="#000"/><rect x="2" y="4" width="12" height="8" fill="#ccccff"/></svg>
<div style="left:0;top:160px;width:123px;height:20px;overflow:hidden;"><span class="t n13" style="left:20px;top:4px;">Группы</span></div>
<svg style="left:22px;top:182px;" width="13" height="16" viewBox="0 0 13 16" shape-rendering="crispEdges"><path d="M0.5 0.5 H8.5 L12.5 4.5 V15.5 H0.5 Z" fill="#fff" stroke="#000"/><rect x="1" y="1" width="1" height="14" fill="#c4c4fa"/><rect x="1" y="14" width="11" height="1" fill="#c4c4fa"/><path d="M8.5 1.5 L11.5 4.5" stroke="#8888cc"/><rect x="8" y="0" width="2" height="2" fill="#000"/></svg>
<div style="left:0;top:180px;width:123px;height:20px;overflow:hidden;"><span class="t n13" style="left:40px;top:4px;">B</span></div>
<svg style="left:22px;top:202px;" width="13" height="16" viewBox="0 0 13 16" shape-rendering="crispEdges"><path d="M0.5 0.5 H8.5 L12.5 4.5 V15.5 H0.5 Z" fill="#fff" stroke="#000"/><rect x="1" y="1" width="1" height="14" fill="#c4c4fa"/><rect x="1" y="14" width="11" height="1" fill="#c4c4fa"/><path d="M8.5 1.5 L11.5 4.5" stroke="#8888cc"/><rect x="8" y="0" width="2" height="2" fill="#000"/></svg>
<div style="left:0;top:200px;width:123px;height:20px;overflow:hidden;"><span class="t n13" style="left:40px;top:4px;">E</span></div>
<svg style="left:22px;top:222px;" width="13" height="16" viewBox="0 0 13 16" shape-rendering="crispEdges"><path d="M0.5 0.5 H8.5 L12.5 4.5 V15.5 H0.5 Z" fill="#fff" stroke="#000"/><rect x="1" y="1" width="1" height="14" fill="#c4c4fa"/><rect x="1" y="14" width="11" height="1" fill="#c4c4fa"/><path d="M8.5 1.5 L11.5 4.5" stroke="#8888cc"/><rect x="8" y="0" width="2" height="2" fill="#000"/></svg>
<div style="left:0;top:220px;width:123px;height:20px;overflow:hidden;"><span class="t n13" style="left:40px;top:4px;">F</span></div>
<svg style="left:22px;top:242px;" width="13" height="16" viewBox="0 0 13 16" shape-rendering="crispEdges"><path d="M0.5 0.5 H8.5 L12.5 4.5 V15.5 H0.5 Z" fill="#fff" stroke="#000"/><rect x="1" y="1" width="1" height="14" fill="#c4c4fa"/><rect x="1" y="14" width="11" height="1" fill="#c4c4fa"/><path d="M8.5 1.5 L11.5 4.5" stroke="#8888cc"/><rect x="8" y="0" width="2" height="2" fill="#000"/></svg>
<div style="left:0;top:240px;width:123px;height:20px;overflow:hidden;"><span class="t n13" style="left:40px;top:4px;">Фиктивные</span></div>
<svg style="left:0px;top:263px;" width="17" height="14" viewBox="0 0 17 14" shape-rendering="crispEdges"><rect x="9" y="0" width="7" height="2" fill="#666699"/><rect x="8" y="1" width="1" height="2" fill="#666699"/><rect x="9" y="2" width="7" height="1" fill="#8a8ac0"/><path d="M0.5 2.5 H15.5 V12.5 H0.5 Z" fill="#fff" stroke="#000"/><rect x="9" y="2" width="7" height="1" fill="#000"/><rect x="2" y="4" width="12" height="8" fill="#ccccff"/></svg>
<div style="left:0;top:260px;width:123px;height:20px;overflow:hidden;"><span class="t n13" style="left:20px;top:4px;">Тарифные планы</span></div>
<svg style="left:22px;top:282px;" width="13" height="16" viewBox="0 0 13 16" shape-rendering="crispEdges"><path d="M0.5 0.5 H8.5 L12.5 4.5 V15.5 H0.5 Z" fill="#fff" stroke="#000"/><rect x="1" y="1" width="1" height="14" fill="#c4c4fa"/><rect x="1" y="14" width="11" height="1" fill="#c4c4fa"/><path d="M8.5 1.5 L11.5 4.5" stroke="#8888cc"/><rect x="8" y="0" width="2" height="2" fill="#000"/></svg>
<div style="left:0;top:280px;width:123px;height:20px;overflow:hidden;"><span class="t n13" style="left:40px;top:4px;">Персональные</span></div>
<svg style="left:22px;top:302px;" width="13" height="16" viewBox="0 0 13 16" shape-rendering="crispEdges"><path d="M0.5 0.5 H8.5 L12.5 4.5 V15.5 H0.5 Z" fill="#fff" stroke="#000"/><rect x="1" y="1" width="1" height="14" fill="#c4c4fa"/><rect x="1" y="14" width="11" height="1" fill="#c4c4fa"/><path d="M8.5 1.5 L11.5 4.5" stroke="#8888cc"/><rect x="8" y="0" width="2" height="2" fill="#000"/></svg>
<div style="left:0;top:300px;width:123px;height:20px;overflow:hidden;"><span class="t n13" style="left:40px;top:4px;">VOIP</span></div>
<svg style="left:22px;top:322px;" width="13" height="16" viewBox="0 0 13 16" shape-rendering="crispEdges"><path d="M0.5 0.5 H8.5 L12.5 4.5 V15.5 H0.5 Z" fill="#fff" stroke="#000"/><rect x="1" y="1" width="1" height="14" fill="#c4c4fa"/><rect x="1" y="14" width="11" height="1" fill="#c4c4fa"/><path d="M8.5 1.5 L11.5 4.5" stroke="#8888cc"/><rect x="8" y="0" width="2" height="2" fill="#000"/></svg>
<div style="left:0;top:320px;width:123px;height:20px;overflow:hidden;"><span class="t n13" style="left:40px;top:4px;">Тестовый</span></div>
<svg style="left:0px;top:343px;" width="17" height="14" viewBox="0 0 17 14" shape-rendering="crispEdges"><rect x="9" y="0" width="7" height="2" fill="#666699"/><rect x="8" y="1" width="1" height="2" fill="#666699"/><rect x="9" y="2" width="7" height="1" fill="#8a8ac0"/><path d="M0.5 2.5 H15.5 V12.5 H0.5 Z" fill="#fff" stroke="#000"/><rect x="9" y="2" width="7" height="1" fill="#000"/><rect x="2" y="4" width="12" height="8" fill="#ccccff"/></svg>
<div style="left:0;top:340px;width:123px;height:20px;overflow:hidden;"><span class="t n13" style="left:20px;top:4px;">Баланс (июль 2007)</span></div>
<svg style="left:22px;top:362px;" width="13" height="16" viewBox="0 0 13 16" shape-rendering="crispEdges"><path d="M0.5 0.5 H8.5 L12.5 4.5 V15.5 H0.5 Z" fill="#fff" stroke="#000"/><rect x="1" y="1" width="1" height="14" fill="#c4c4fa"/><rect x="1" y="14" width="11" height="1" fill="#c4c4fa"/><path d="M8.5 1.5 L11.5 4.5" stroke="#8888cc"/><rect x="8" y="0" width="2" height="2" fill="#000"/></svg>
<div style="left:0;top:360px;width:123px;height:20px;overflow:hidden;"><span class="t n13" style="left:40px;top:4px;">Расчетный</span></div>
<span class="t n12" style="right:2px;top:365px;">119729.94</span>
<div style="left:7px;top:119px;width:1px;height:32px;background:#c0c0f0;"></div>
<div style="left:7px;top:130px;width:10px;height:1px;background:#c0c0f0;"></div>
<div style="left:7px;top:150px;width:10px;height:1px;background:#c0c0f0;"></div>
<div style="left:7px;top:179px;width:1px;height:72px;background:#c0c0f0;"></div>
<div style="left:7px;top:190px;width:10px;height:1px;background:#c0c0f0;"></div>
<div style="left:7px;top:210px;width:10px;height:1px;background:#c0c0f0;"></div>
<div style="left:7px;top:230px;width:10px;height:1px;background:#c0c0f0;"></div>
<div style="left:7px;top:250px;width:10px;height:1px;background:#c0c0f0;"></div>
<div style="left:7px;top:279px;width:1px;height:52px;background:#c0c0f0;"></div>
<div style="left:7px;top:290px;width:10px;height:1px;background:#c0c0f0;"></div>
<div style="left:7px;top:310px;width:10px;height:1px;background:#c0c0f0;"></div>
<div style="left:7px;top:330px;width:10px;height:1px;background:#c0c0f0;"></div>
<div style="left:7px;top:359px;width:1px;height:12px;background:#c0c0f0;"></div>
<div style="left:7px;top:370px;width:10px;height:1px;background:#c0c0f0;"></div>
</div>
<!-- v scrollbar -->
<div style="left:212px;top:201px;width:16px;height:367px;background:#cfcfd1;border-left:1px solid #6a6a6a;border-right:1px solid #6a6a6a;"></div>
<div style="left:213px;top:202px;width:1px;height:365px;background:#a8a8aa;"></div>
<div style="left:212px;top:201px;width:16px;height:15px;background:#cfcfd1;border-top:1px solid #6a6a6a;border-left:1px solid #6a6a6a;border-right:1px solid #6a6a6a;"></div>
<div style="left:213px;top:202px;width:14px;height:1px;background:#fff;"></div><div style="left:213px;top:202px;width:1px;height:14px;background:#fff;"></div>
<svg style="left:217px;top:207px;" width="8" height="4" viewBox="0 0 8 4" shape-rendering="crispEdges"><path d="M3 0 H5 V1 H6 V2 H7 V3 H8 V4 H0 V3 H1 V2 H2 V1 H3 Z" fill="#000"/></svg>
<div style="left:212px;top:216px;width:16px;height:151px;background:#9c9cd0;border:1px solid #666699;"></div>
<div style="left:213px;top:217px;width:14px;height:1px;background:#ccccff;"></div><div style="left:213px;top:217px;width:1px;height:149px;background:#ccccff;"></div>
<svg style="left:215px;top:219px;" width="11" height="145" shape-rendering="crispEdges"><rect width="11" height="145" fill="url(#bumps)"/></svg>
<div style="left:212px;top:552px;width:16px;height:16px;background:#cfcfd1;border:1px solid #6a6a6a;"></div>
<div style="left:213px;top:553px;width:14px;height:1px;background:#fff;"></div><div style="left:213px;top:553px;width:1px;height:14px;background:#fff;"></div>
<svg style="left:217px;top:559px;" width="8" height="4" viewBox="0 0 8 4" shape-rendering="crispEdges"><path d="M0 0 H8 V1 H7 V2 H6 V3 H5 V4 H3 V3 H2 V2 H1 V1 H0 Z" fill="#000"/></svg>
<div style="left:18px;top:568px;width:211px;height:1px;background:#fff;"></div>
<div style="left:22px;top:574px;width:13px;height:13px;border-top:1px solid #6a6a6a;border-left:1px solid #6a6a6a;border-right:1px solid #fff;border-bottom:1px solid #fff;"></div>
<div style="left:23px;top:575px;width:11px;height:11px;border-top:1px solid #fff;border-left:1px solid #fff;border-right:1px solid #6a6a6a;border-bottom:1px solid #6a6a6a;"></div>
<span class="t b13" style="left:39px;top:574px;">Скрытый</span>
<div style="left:232px;top:186px;width:1px;height:406px;background:#fff;"></div>
<div style="left:236px;top:186px;width:1px;height:406px;background:#6a6a6a;"></div>
<!-- table -->
<div style="left:240px;top:186px;width:645px;height:406px;border-top:1px solid #6a6a6a;border-left:1px solid #6a6a6a;border-right:1px solid #fff;border-bottom:1px solid #fff;"></div>
<div style="left:241px;top:187px;width:643px;height:15px;background:#cfcfd1;border-top:1px solid #fff;border-left:1px solid #fff;border-bottom:1px solid #6a6a6a;"></div>
<div style="left:883px;top:187px;width:1px;height:404px;background:#6a6a6a;"></div>
<div style="left:270px;top:188px;width:1px;height:13px;background:#6a6a6a;"></div>
<div style="left:271px;top:188px;width:1px;height:13px;background:#fff;"></div>
<span class="t n13" style="left:558px;top:188px;letter-spacing:0.2px;">Наименование группы</span>
<div style="left:241px;top:202px;width:642px;height:320px;background:#fdfdfb;"></div>
<div style="left:241px;top:217px;width:642px;height:1px;background:#8c8c8c;"></div>
<div style="left:249px;top:203px;width:12px;height:12px;border:1px solid #5a5a5a;border-right-color:#7a7a7a;border-bottom-color:#7a7a7a;"></div>
<svg style="left:252px;top:206px;" width="7" height="7" viewBox="0 0 7 7" shape-rendering="crispEdges"><rect x="6" y="0" width="1" height="1" fill="#000"/><rect x="5" y="1" width="2" height="1" fill="#000"/><rect x="0" y="2" width="2" height="1" fill="#000"/><rect x="4" y="2" width="2" height="1" fill="#000"/><rect x="0" y="3" width="2" height="1" fill="#000"/><rect x="3" y="3" width="2" height="1" fill="#000"/><rect x="0" y="4" width="4" height="1" fill="#000"/><rect x="0" y="5" width="3" height="1" fill="#000"/><rect x="0" y="6" width="2" height="1" fill="#000"/></svg>
<span class="t n11" style="left:272px;top:204px;">B</span>
<div style="left:241px;top:233px;width:642px;height:1px;background:#8c8c8c;"></div>
<div style="left:249px;top:219px;width:12px;height:12px;border:1px solid #5a5a5a;border-right-color:#7a7a7a;border-bottom-color:#7a7a7a;"></div>
<span class="t n11" style="left:272px;top:220px;">C</span>
<div style="left:241px;top:249px;width:642px;height:1px;background:#8c8c8c;"></div>
<div style="left:249px;top:235px;width:12px;height:12px;border:1px solid #5a5a5a;border-right-color:#7a7a7a;border-bottom-color:#7a7a7a;"></div>
<svg style="left:252px;top:238px;" width="7" height="7" viewBox="0 0 7 7" shape-rendering="crispEdges"><rect x="6" y="0" width="1" height="1" fill="#000"/><rect x="5" y="1" width="2" height="1" fill="#000"/><rect x="0" y="2" width="2" height="1" fill="#000"/><rect x="4" y="2" width="2" height="1" fill="#000"/><rect x="0" y="3" width="2" height="1" fill="#000"/><rect x="3" y="3" width="2" height="1" fill="#000"/><rect x="0" y="4" width="4" height="1" fill="#000"/><rect x="0" y="5" width="3" height="1" fill="#000"/><rect x="0" y="6" width="2" height="1" fill="#000"/></svg>
<span class="t n11" style="left:272px;top:236px;">E</span>
<div style="left:241px;top:265px;width:642px;height:1px;background:#8c8c8c;"></div>
<div style="left:249px;top:251px;width:12px;height:12px;border:1px solid #5a5a5a;border-right-color:#7a7a7a;border-bottom-color:#7a7a7a;"></div>
<span class="t n11" style="left:272px;top:252px;">L</span>
<div style="left:241px;top:281px;width:642px;height:1px;background:#8c8c8c;"></div>
<div style="left:249px;top:267px;width:12px;height:12px;border:1px solid #5a5a5a;border-right-color:#7a7a7a;border-bottom-color:#7a7a7a;"></div>
<span class="t n11" style="left:272px;top:268px;">M</span>
<div style="left:241px;top:297px;width:642px;height:1px;background:#8c8c8c;"></div>
<div style="left:249px;top:283px;width:12px;height:12px;border:1px solid #5a5a5a;border-right-color:#7a7a7a;border-bottom-color:#7a7a7a;"></div>
<span class="t n11" style="left:272px;top:284px;">S</span>
<div style="left:241px;top:313px;width:642px;height:1px;background:#8c8c8c;"></div>
<div style="left:249px;top:299px;width:12px;height:12px;border:1px solid #5a5a5a;border-right-color:#7a7a7a;border-bottom-color:#7a7a7a;"></div>
<span class="t n11" style="left:272px;top:300px;">V</span>
<div style="left:241px;top:329px;width:642px;height:1px;background:#8c8c8c;"></div>
<div style="left:249px;top:315px;width:12px;height:12px;border:1px solid #5a5a5a;border-right-color:#7a7a7a;border-bottom-color:#7a7a7a;"></div>
<span class="t n11" style="left:272px;top:316px;">VIP-клиенты</span>
<div style="left:241px;top:345px;width:642px;height:1px;background:#8c8c8c;"></div>
<div style="left:249px;top:331px;width:12px;height:12px;border:1px solid #5a5a5a;border-right-color:#7a7a7a;border-bottom-color:#7a7a7a;"></div>
<span class="t n11" style="left:272px;top:332px;">X</span>
<div style="left:241px;top:361px;width:642px;height:1px;background:#8c8c8c;"></div>
<div style="left:249px;top:347px;width:12px;height:12px;border:1px solid #5a5a5a;border-right-color:#7a7a7a;border-bottom-color:#7a7a7a;"></div>
<span class="t n11" style="left:272px;top:348px;">Группа 25</span>
<div style="left:241px;top:377px;width:642px;height:1px;background:#8c8c8c;"></div>
<div style="left:249px;top:363px;width:12px;height:12px;border:1px solid #5a5a5a;border-right-color:#7a7a7a;border-bottom-color:#7a7a7a;"></div>
<span class="t n11" style="left:272px;top:364px;">Загруженные</span>
<div style="left:241px;top:393px;width:642px;height:1px;background:#8c8c8c;"></div>
<div style="left:249px;top:379px;width:12px;height:12px;border:1px solid #5a5a5a;border-right-color:#7a7a7a;border-bottom-color:#7a7a7a;"></div>
<span class="t n11" style="left:272px;top:380px;">Закрытые</span>
<div style="left:241px;top:409px;width:642px;height:1px;background:#8c8c8c;"></div>
<div style="left:249px;top:395px;width:12px;height:12px;border:1px solid #5a5a5a;border-right-color:#7a7a7a;border-bottom-color:#7a7a7a;"></div>
<span class="t n11" style="left:272px;top:396px;">карта - подарок</span>
<div style="left:241px;top:425px;width:642px;height:1px;background:#8c8c8c;"></div>
<div style="left:249px;top:411px;width:12px;height:12px;border:1px solid #5a5a5a;border-right-color:#7a7a7a;border-bottom-color:#7a7a7a;"></div>
<span class="t n11" style="left:272px;top:412px;">Каточки</span>
<div style="left:241px;top:441px;width:642px;height:1px;background:#8c8c8c;"></div>
<div style="left:249px;top:427px;width:12px;height:12px;border:1px solid #5a5a5a;border-right-color:#7a7a7a;border-bottom-color:#7a7a7a;"></div>
<span class="t n11" style="left:272px;top:428px;">Организации</span>
<div style="left:241px;top:457px;width:642px;height:1px;background:#8c8c8c;"></div>
<div style="left:249px;top:443px;width:12px;height:12px;border:1px solid #5a5a5a;border-right-color:#7a7a7a;border-bottom-color:#7a7a7a;"></div>
<span class="t n11" style="left:272px;top:444px;">Сотрудники</span>
<div style="left:241px;top:473px;width:642px;height:1px;background:#8c8c8c;"></div>
<div style="left:249px;top:459px;width:12px;height:12px;border:1px solid #5a5a5a;border-right-color:#7a7a7a;border-bottom-color:#7a7a7a;"></div>
<span class="t n11" style="left:272px;top:460px;">TTT</span>
<div style="left:241px;top:489px;width:642px;height:1px;background:#8c8c8c;"></div>
<div style="left:249px;top:475px;width:12px;height:12px;border:1px solid #5a5a5a;border-right-color:#7a7a7a;border-bottom-color:#7a7a7a;"></div>
<svg style="left:252px;top:478px;" width="7" height="7" viewBox="0 0 7 7" shape-rendering="crispEdges"><rect x="6" y="0" width="1" height="1" fill="#000"/><rect x="5" y="1" width="2" height="1" fill="#000"/><rect x="0" y="2" width="2" height="1" fill="#000"/><rect x="4" y="2" width="2" height="1" fill="#000"/><rect x="0" y="3" width="2" height="1" fill="#000"/><rect x="3" y="3" width="2" height="1" fill="#000"/><rect x="0" y="4" width="4" height="1" fill="#000"/><rect x="0" y="5" width="3" height="1" fill="#000"/><rect x="0" y="6" width="2" height="1" fill="#000"/></svg>
<span class="t n11" style="left:272px;top:476px;">Фиктивные</span>
<div style="left:241px;top:505px;width:642px;height:1px;background:#8c8c8c;"></div>
<div style="left:249px;top:491px;width:12px;height:12px;border:1px solid #5a5a5a;border-right-color:#7a7a7a;border-bottom-color:#7a7a7a;"></div>
<span class="t n11" style="left:272px;top:492px;">Хостинг</span>
<div style="left:241px;top:521px;width:642px;height:1px;background:#8c8c8c;"></div>
<div style="left:249px;top:507px;width:12px;height:12px;border:1px solid #5a5a5a;border-right-color:#7a7a7a;border-bottom-color:#7a7a7a;"></div>
<span class="t n11" style="left:272px;top:508px;">Частные лица</span>
<div style="left:270px;top:202px;width:1px;height:320px;background:#8c8c8c;"></div>
<div style="left:241px;top:575px;width:643px;height:16px;background:#cfcfd1;border-top:1px solid #6a6a6a;border-bottom:1px solid #6a6a6a;"></div>
<div style="left:241px;top:576px;width:642px;height:1px;background:#a8a8aa;"></div>
<div style="left:241px;top:575px;width:16px;height:16px;background:#cfcfd1;border:1px solid #6a6a6a;border-right:none;"></div>
<div style="left:242px;top:576px;width:14px;height:1px;background:#fff;"></div><div style="left:242px;top:576px;width:1px;height:14px;background:#fff;"></div>
<svg style="left:246px;top:579px;" width="4" height="8" viewBox="0 0 4 8" shape-rendering="crispEdges"><path d="M4 0 V8 H3 V7 H2 V6 H1 V5 H0 V3 H1 V2 H2 V1 H3 V0 Z" fill="#000"/></svg>
<div style="left:256px;top:575px;width:528px;height:16px;background:#9c9cd0;border:1px solid #666699;"></div>
<div style="left:257px;top:576px;width:526px;height:1px;background:#ccccff;"></div><div style="left:257px;top:576px;width:1px;height:14px;background:#ccccff;"></div>
<svg style="left:259px;top:578px;" width="522" height="11" shape-rendering="crispEdges"><rect width="522" height="11" fill="url(#bumps)"/></svg>
<div style="left:867px;top:575px;width:17px;height:16px;background:#cfcfd1;border:1px solid #6a6a6a;"></div>
<div style="left:868px;top:576px;width:15px;height:1px;background:#fff;"></div><div style="left:868px;top:576px;width:1px;height:14px;background:#fff;"></div>
<svg style="left:874px;top:579px;" width="4" height="8" viewBox="0 0 4 8" shape-rendering="crispEdges"><path d="M0 0 V8 H1 V7 H2 V6 H3 V5 H4 V3 H3 V2 H2 V1 H1 V0 Z" fill="#000"/></svg>
<!-- bottom tabs -->
<div style="left:4px;top:602px;width:897px;height:1px;background:#6a6a6a;"></div>
<div style="left:6px;top:603px;width:187px;height:18px;background:#a5a5a8;border-left:1px solid #fff;border-right:1px solid #6a6a6a;border-bottom:1px solid #6a6a6a;"></div>
<div style="left:11px;top:607px;width:16px;height:15px;border-top:1px solid #fff;border-left:1px solid #fff;border-right:1px solid #888;border-bottom:1px solid #888;"></div>
<svg style="left:15px;top:611px;" width="8" height="8" viewBox="0 0 8 8" shape-rendering="crispEdges"><rect x="0" y="0" width="2" height="1" fill="#111"/><rect x="6" y="0" width="2" height="1" fill="#111"/><rect x="0" y="1" width="3" height="1" fill="#111"/><rect x="5" y="1" width="3" height="1" fill="#111"/><rect x="1" y="2" width="6" height="1" fill="#111"/><rect x="2" y="3" width="4" height="1" fill="#111"/><rect x="2" y="4" width="4" height="1" fill="#111"/><rect x="1" y="5" width="6" height="1" fill="#111"/><rect x="0" y="6" width="3" height="1" fill="#111"/><rect x="5" y="6" width="3" height="1" fill="#111"/><rect x="0" y="7" width="2" height="1" fill="#111"/><rect x="6" y="7" width="2" height="1" fill="#111"/></svg>
<span class="t b13" style="left:32px;top:605px;letter-spacing:-0.15px;">Редактор справочников</span>
<div style="left:193px;top:603px;width:165px;height:18px;background:#a5a5a8;border-left:1px solid #fff;border-right:1px solid #6a6a6a;border-bottom:1px solid #6a6a6a;"></div>
<div style="left:198px;top:607px;width:16px;height:15px;border-top:1px solid #fff;border-left:1px solid #fff;border-right:1px solid #888;border-bottom:1px solid #888;"></div>
<svg style="left:202px;top:611px;" width="8" height="8" viewBox="0 0 8 8" shape-rendering="crispEdges"><rect x="0" y="0" width="2" height="1" fill="#111"/><rect x="6" y="0" width="2" height="1" fill="#111"/><rect x="0" y="1" width="3" height="1" fill="#111"/><rect x="5" y="1" width="3" height="1" fill="#111"/><rect x="1" y="2" width="6" height="1" fill="#111"/><rect x="2" y="3" width="4" height="1" fill="#111"/><rect x="2" y="4" width="4" height="1" fill="#111"/><rect x="1" y="5" width="6" height="1" fill="#111"/><rect x="0" y="6" width="3" height="1" fill="#111"/><rect x="5" y="6" width="3" height="1" fill="#111"/><rect x="0" y="7" width="2" height="1" fill="#111"/><rect x="6" y="7" width="2" height="1" fill="#111"/></svg>
<span class="t b13" style="left:218px;top:605px;letter-spacing:-0.15px;">Скрипты поведения</span>
<div style="left:358px;top:603px;width:144px;height:18px;background:#a5a5a8;border-left:1px solid #fff;border-right:1px solid #6a6a6a;border-bottom:1px solid #6a6a6a;"></div>
<div style="left:362px;top:607px;width:16px;height:15px;border-top:1px solid #fff;border-left:1px solid #fff;border-right:1px solid #888;border-bottom:1px solid #888;"></div>
<svg style="left:366px;top:611px;" width="8" height="8" viewBox="0 0 8 8" shape-rendering="crispEdges"><rect x="0" y="0" width="2" height="1" fill="#111"/><rect x="6" y="0" width="2" height="1" fill="#111"/><rect x="0" y="1" width="3" height="1" fill="#111"/><rect x="5" y="1" width="3" height="1" fill="#111"/><rect x="1" y="2" width="6" height="1" fill="#111"/><rect x="2" y="3" width="4" height="1" fill="#111"/><rect x="2" y="4" width="4" height="1" fill="#111"/><rect x="1" y="5" width="6" height="1" fill="#111"/><rect x="0" y="6" width="3" height="1" fill="#111"/><rect x="5" y="6" width="3" height="1" fill="#111"/><rect x="0" y="7" width="2" height="1" fill="#111"/><rect x="6" y="7" width="2" height="1" fill="#111"/></svg>
<span class="t b13" style="left:382px;top:605px;letter-spacing:-0.15px;">Поиск договоров</span>
<div class="g" style="left:502px;top:602px;width:77px;height:21px;border-left:1px solid #fff;border-right:1px solid #6a6a6a;border-bottom:1px solid #6a6a6a;"></div>
<div style="left:506px;top:605px;width:16px;height:16px;border-top:1px solid #fff;border-left:1px solid #fff;border-right:1px solid #888;border-bottom:1px solid #888;"></div>
<svg style="left:510px;top:609px;" width="8" height="8" viewBox="0 0 8 8" shape-rendering="crispEdges"><rect x="0" y="0" width="2" height="1" fill="#111"/><rect x="6" y="0" width="2" height="1" fill="#111"/><rect x="0" y="1" width="3" height="1" fill="#111"/><rect x="5" y="1" width="3" height="1" fill="#111"/><rect x="1" y="2" width="6" height="1" fill="#111"/><rect x="2" y="3" width="4" height="1" fill="#111"/><rect x="2" y="4" width="4" height="1" fill="#111"/><rect x="1" y="5" width="6" height="1" fill="#111"/><rect x="0" y="6" width="3" height="1" fill="#111"/><rect x="5" y="6" width="3" height="1" fill="#111"/><rect x="0" y="7" width="2" height="1" fill="#111"/><rect x="6" y="7" width="2" height="1" fill="#111"/></svg>
<span class="t b13" style="left:527px;top:607px;letter-spacing:0.4px;">x0000</span>
</body></html>
